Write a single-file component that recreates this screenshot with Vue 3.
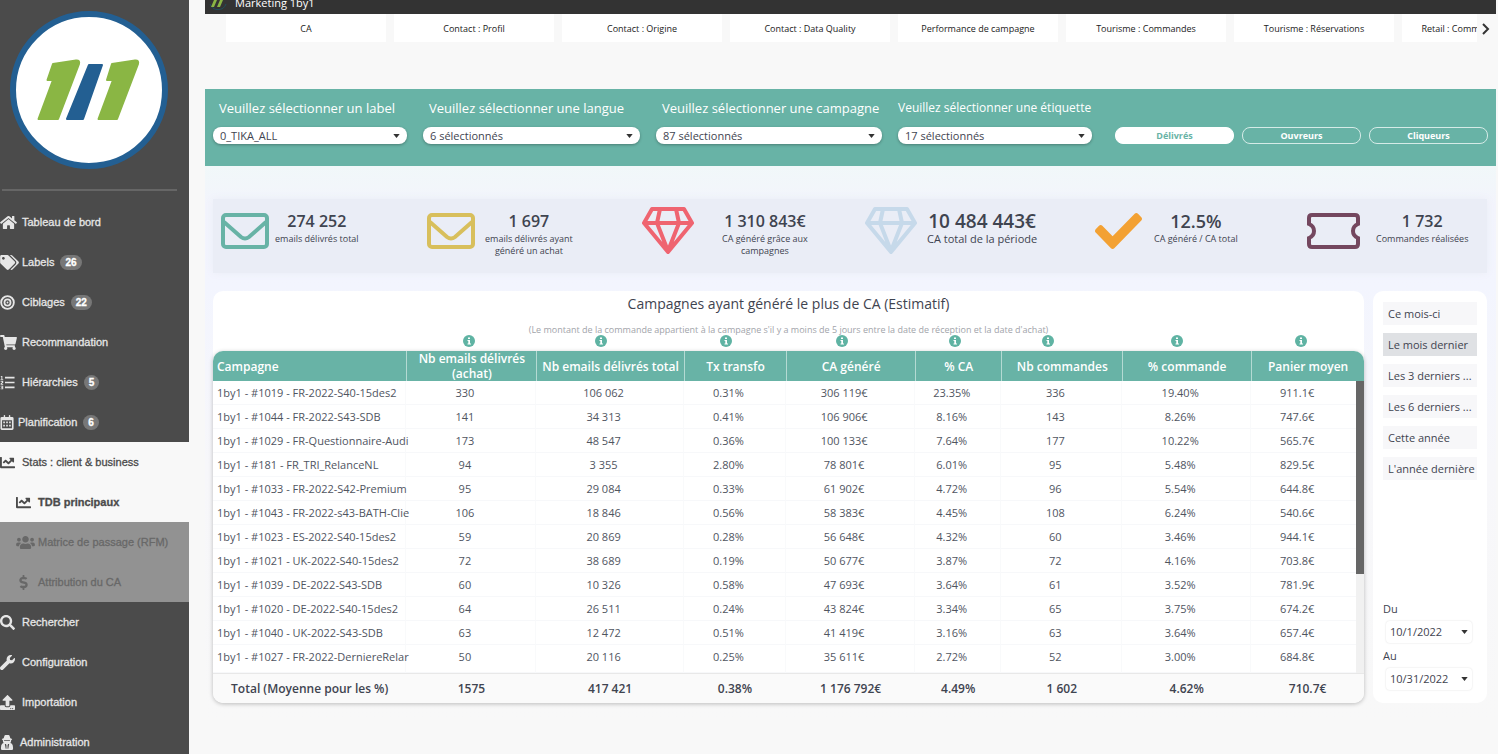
<script setup>
const menuTop = [
  { icon: 'home', label: 'Tableau de bord' },
  { icon: 'tags', label: 'Labels', count: 26 },
  { icon: 'target', label: 'Ciblages', count: 22 },
  { icon: 'cart', label: 'Recommandation' },
  { icon: 'list', label: 'Hiérarchies', count: 5 },
  { icon: 'calendar', label: 'Planification', count: 6 },
  { icon: 'chart', label: 'Stats : client & business', kind: 'open' },
  { icon: 'chart', label: 'TDB principaux', kind: 'current' },
  { icon: 'users', label: 'Matrice de passage (RFM)', kind: 'sub' },
  { icon: 'dollar', label: 'Attribution du CA', kind: 'sub' },
  { icon: 'search', label: 'Rechercher' },
  { icon: 'wrench', label: 'Configuration' },
  { icon: 'upload', label: 'Importation' },
  { icon: 'agent', label: 'Administration' }
]

const icons = {
  home: { box: '0 0 576 512', d: 'M280.37 148.26L96 300.11V464a16 16 0 0 0 16 16l112.06-.29a16 16 0 0 0 15.92-16V368a16 16 0 0 1 16-16h64a16 16 0 0 1 16 16v95.64a16 16 0 0 0 16 16.05L464 480a16 16 0 0 0 16-16V300L295.67 148.26a12.19 12.19 0 0 0-15.3 0zM571.6 251.47L488 182.56V44.05a12 12 0 0 0-12-12h-56a12 12 0 0 0-12 12v72.61L318.47 43a48 48 0 0 0-61 0L4.34 251.47a12 12 0 0 0-1.6 16.9l25.5 31A12 12 0 0 0 45.15 301l235.22-193.74a12.19 12.19 0 0 1 15.3 0L530.9 301a12 12 0 0 0 16.9-1.6l25.5-31a12 12 0 0 0-1.7-16.93z' },
  tags: { box: '0 0 640 512', d: 'M497.941 225.941L286.059 14.059A48 48 0 0 0 252.118 0H48C21.49 0 0 21.49 0 48v204.118a48 48 0 0 0 14.059 33.941l211.882 211.882c18.744 18.745 49.136 18.746 67.882 0l204.118-204.118c18.745-18.745 18.745-49.137 0-67.882zM112 160c-26.51 0-48-21.49-48-48s21.49-48 48-48 48 21.49 48 48-21.49 48-48 48zm513.941 133.823L421.823 497.941c-18.745 18.745-49.137 18.745-67.882 0l-.36-.36L527.64 323.522c16.999-16.999 26.36-39.6 26.36-63.64s-9.362-46.641-26.36-63.64L331.397 0h48.721a48 48 0 0 1 33.941 14.059l211.882 211.882c18.745 18.745 18.745 49.137 0 67.882z' },
  target: { box: '0 0 512 512', d: 'M256 8a248 248 0 1 0 0 496a248 248 0 1 0 0-496zM256 72a184 184 0 1 1 0 368a184 184 0 1 1 0-368zM256 122a134 134 0 1 0 0 268a134 134 0 1 0 0-268zM256 182a74 74 0 1 1 0 148a74 74 0 1 1 0-148zM256 224a32 32 0 1 0 0 64a32 32 0 1 0 0-64z' },
  cart: { box: '0 0 576 512', d: 'M528.12 301.319l47.273-208C578.806 78.301 567.391 64 551.99 64H159.208l-9.166-44.81C147.758 8.021 137.93 0 126.529 0H24C10.745 0 0 10.745 0 24v16c0 13.255 10.745 24 24 24h69.883l70.248 343.435C147.325 417.1 136 435.222 136 456c0 30.928 25.072 56 56 56s56-25.072 56-56c0-15.674-6.447-29.835-16.824-40h209.647C430.447 426.165 424 440.326 424 456c0 30.928 25.072 56 56 56s56-25.072 56-56c0-22.172-12.888-41.332-31.579-50.405l5.517-24.276c3.413-15.018-8.002-29.319-23.403-29.319H218.117l-6.545-32h293.145c11.206 0 20.92-7.754 23.403-18.681z' },
  list: { box: '0 0 512 512', d: 'M170 60h326v56H170zM170 228h326v56H170zM170 396h326v56H170zM30 30h50v110h30v26H20v-26h26V62H24zM20 200h90v66l-54 40h54v28H20v-42l52-42v-20H20zM20 370h90v116H20v-26h58v-20H40v-24h38v-20H20z' },
  calendar: { box: '0 0 448 512', d: 'M48 64h64V16q0-16 16-16h16q16 0 16 16v48h128V16q0-16 16-16h16q16 0 16 16v48h64q48 0 48 48v352q0 48-48 48H48q-48 0-48-48V112q0-48 48-48zM56 176v272q0 8 8 8h320q8 0 8-8V176zM96 224h56v56H96zM196 224h56v56h-56zM296 224h56v56h-56zM96 336h56v56H96zM196 336h56v56h-56zM296 336h56v56h-56z' },
  chart: { box: '0 0 512 512', d: 'M496 384H64V80c0-8.84-7.16-16-16-16H16C7.16 64 0 71.16 0 80v336c0 17.67 14.33 32 32 32h464c8.84 0 16-7.16 16-16v-32c0-8.84-7.16-16-16-16zM464 96H345.94c-21.38 0-32.09 25.85-16.97 40.97l32.4 32.4L288 242.75l-73.37-73.37c-12.5-12.5-32.76-12.5-45.25 0l-68.69 68.69c-6.25 6.25-6.25 16.38 0 22.63l22.62 22.62c6.25 6.25 16.38 6.25 22.63 0L192 237.25l73.37 73.37c12.5 12.5 32.76 12.5 45.25 0l96-96 32.4 32.4c15.12 15.12 40.97 4.41 40.97-16.97V112c.01-8.84-7.15-16-15.99-16z' },
  users: { box: '0 0 640 512', d: 'M96 224c35.3 0 64-28.7 64-64s-28.7-64-64-64-64 28.7-64 64 28.7 64 64 64zm448 0c35.3 0 64-28.7 64-64s-28.7-64-64-64-64 28.7-64 64 28.7 64 64 64zm32 32h-64c-17.6 0-33.5 7.1-45.1 18.6 40.3 22.1 68.9 62 75.1 109.4h66c17.7 0 32-14.3 32-32v-32c0-35.3-28.7-64-64-64zm-256 0c61.9 0 112-50.1 112-112S381.9 32 320 32 208 82.1 208 144s50.1 112 112 112zm76.8 32h-8.3c-20.8 10-43.9 16-68.5 16s-47.6-6-68.5-16h-8.3C179.6 288 128 339.6 128 403.2V432c0 26.5 21.5 48 48 48h288c26.5 0 48-21.5 48-48v-28.8c0-63.6-51.6-115.2-115.2-115.2zm-223.7-13.4C161.5 263.1 145.6 256 128 256H64c-35.3 0-64 28.7-64 64v32c0 17.7 14.3 32 32 32h65.9c6.3-47.4 34.9-87.3 75.2-109.4z' },
  dollar: { box: '-112 0 512 512', d: 'M209.2 233.4l-108-31.6C88.7 198.2 80 186.5 80 173.5c0-16.3 13.2-29.5 29.5-29.5h66.3c12.2 0 24.2 3.7 34.2 10.5 6.1 4.1 14.3 3.1 19.5-2l34.8-34c7.1-6.9 6.1-18.4-1.8-24.5C238 74.8 207.4 64.1 176 64V16c0-8.8-7.2-16-16-16h-32c-8.8 0-16 7.2-16 16v48h-2.5C45.8 64-5.4 118.7.5 183.6c4.2 46.1 39.4 83.6 83.8 96.6l102.5 30c12.5 3.7 21.2 15.3 21.2 28.3 0 16.3-13.2 29.5-29.5 29.5h-66.3C100 368 88 364.3 78 357.5c-6.1-4.1-14.3-3.1-19.5 2l-34.8 34c-7.1 6.9-6.1 18.4 1.8 24.5 24.5 19.2 55.1 29.9 86.5 30v48c0 8.8 7.2 16 16 16h32c8.8 0 16-7.2 16-16v-48.2c46.6-.9 90.3-28.6 105.7-72.7 21.5-61.6-14.6-124.8-72.5-141.7z' },
  search: { box: '0 0 512 512', d: 'M505 442.7L405.3 343c-4.5-4.5-10.6-7-17-7H372c27.6-35.3 44-79.7 44-128C416 93.1 322.9 0 208 0S0 93.1 0 208s93.1 208 208 208c48.3 0 92.7-16.4 128-44v16.3c0 6.4 2.5 12.5 7 17l99.7 99.7c9.4 9.4 24.6 9.4 33.9 0l28.3-28.3c9.4-9.4 9.4-24.6.1-34zM208 336c-70.7 0-128-57.2-128-128 0-70.7 57.2-128 128-128 70.7 0 128 57.2 128 128 0 70.7-57.2 128-128 128z' },
  wrench: { box: '0 0 512 512', d: 'M507.73 109.1c-2.24-9.03-13.54-12.09-20.12-5.51l-74.36 74.36-67.88-11.31-11.31-67.88 74.36-74.36c6.62-6.62 3.43-17.9-5.66-20.16-47.38-11.74-99.55.91-136.58 37.93-39.64 39.64-50.55 97.1-34.05 147.2L18.74 402.76c-24.99 24.99-24.99 65.51 0 90.5 24.99 24.99 65.51 24.99 90.5 0l213.21-213.21c50.12 16.71 107.47 5.68 147.37-34.22 37.07-37.07 49.7-89.32 37.91-136.73z' },
  upload: { box: '0 0 512 512', d: 'M296 384h-80c-13.3 0-24-10.7-24-24V192h-87.7c-17.8 0-26.7-21.5-14.1-34.1L242.3 5.7c7.5-7.5 19.8-7.5 27.3 0l152.2 152.2c12.6 12.6 3.7 34.1-14.1 34.1H320v168c0 13.3-10.7 24-24 24zm216-8v112c0 13.3-10.7 24-24 24H24c-13.3 0-24-10.7-24-24V376c0-13.3 10.7-24 24-24h136v8c0 30.9 25.1 56 56 56h80c30.9 0 56-25.1 56-56v-8h136c13.3 0 24 10.7 24 24zm-124 88c0-11-9-20-20-20s-20 9-20 20 9 20 20 20 20-9 20-20zm64 0c0-11-9-20-20-20s-20 9-20 20 9 20 20 20 20-9 20-20z' },
  agent: { box: '0 0 448 512', d: 'M110 110L140 14Q150 0 170 0H278Q298 0 308 14L338 110Q400 122 400 145Q400 168 366 172V200Q366 240 340 270L380 290Q430 330 430 430V470Q430 512 392 512H56Q18 512 18 470V430Q18 330 68 290L108 270Q82 240 82 200V172Q48 168 48 145Q48 122 110 110zM124 180V206H324V180zM150 310L180 470H206V360L190 310zM298 310L268 470H242V360L258 310z' }
}

const tabs = ['CA', 'Contact : Profil', 'Contact : Origine', 'Contact : Data Quality', 'Performance de campagne', 'Tourisme : Commandes', 'Tourisme : Réservations', 'Retail : Commandes magasin']

const filters = [
  { id: 'label', title: 'Veuillez sélectionner un label', value: '0_TIKA_ALL' },
  { id: 'langue', title: 'Veuillez sélectionner une langue', value: '6 sélectionnés' },
  { id: 'campagne', title: 'Veuillez sélectionner une campagne', value: '87 sélectionnés' },
  { id: 'etiquette', title: 'Veuillez sélectionner une étiquette', value: '17 sélectionnés' }
]
const modes = ['Délivrés', 'Ouvreurs', 'Cliqueurs']

const kpis = [
  { icon: 'mail', tone: 'teal', value: '274 252', lines: ['emails délivrés total'] },
  { icon: 'mail', tone: 'gold', value: '1 697', lines: ['emails délivrés ayant', 'généré un achat'] },
  { icon: 'gem', tone: 'red', value: '1 310 843€', lines: ['CA généré grâce aux', 'campagnes'] },
  { icon: 'gem', tone: 'sky', value: '10 484 443€', lines: ['CA total de la période'] },
  { icon: 'check', tone: 'orange', value: '12.5%', lines: ['CA généré / CA total'] },
  { icon: 'ticket', tone: 'plum', value: '1 732', lines: ['Commandes réalisées'] }
]

const columns = ['Campagne', 'Nb emails délivrés (achat)', 'Nb emails délivrés total', 'Tx transfo', 'CA généré', '% CA', 'Nb commandes', '% commande', 'Panier moyen']
const rows = [
  ['1by1 - #1019 - FR-2022-S40-15des2', '330', '106 062', '0.31%', '306 119€', '23.35%', '336', '19.40%', '911.1€'],
  ['1by1 - #1044 - FR-2022-S43-SDB', '141', '34 313', '0.41%', '106 906€', '8.16%', '143', '8.26%', '747.6€'],
  ['1by1 - #1029 - FR-Questionnaire-Audi', '173', '48 547', '0.36%', '100 133€', '7.64%', '177', '10.22%', '565.7€'],
  ['1by1 - #181 - FR_TRI_RelanceNL', '94', '3 355', '2.80%', '78 801€', '6.01%', '95', '5.48%', '829.5€'],
  ['1by1 - #1033 - FR-2022-S42-Premium', '95', '29 084', '0.33%', '61 902€', '4.72%', '96', '5.54%', '644.8€'],
  ['1by1 - #1043 - FR-2022-s43-BATH-Clie', '106', '18 846', '0.56%', '58 383€', '4.45%', '108', '6.24%', '540.6€'],
  ['1by1 - #1023 - ES-2022-S40-15des2', '59', '20 869', '0.28%', '56 648€', '4.32%', '60', '3.46%', '944.1€'],
  ['1by1 - #1021 - UK-2022-S40-15des2', '72', '38 689', '0.19%', '50 677€', '3.87%', '72', '4.16%', '703.8€'],
  ['1by1 - #1039 - DE-2022-S43-SDB', '60', '10 326', '0.58%', '47 693€', '3.64%', '61', '3.52%', '781.9€'],
  ['1by1 - #1020 - DE-2022-S40-15des2', '64', '26 511', '0.24%', '43 824€', '3.34%', '65', '3.75%', '674.2€'],
  ['1by1 - #1040 - UK-2022-S43-SDB', '63', '12 472', '0.51%', '41 419€', '3.16%', '63', '3.64%', '657.4€'],
  ['1by1 - #1027 - FR-2022-DerniereRelar', '50', '20 116', '0.25%', '35 611€', '2.72%', '52', '3.00%', '684.8€']
]
const totals = ['Total (Moyenne pour les %)', '1575', '417 421', '0.38%', '1 176 792€', '4.49%', '1 602', '4.62%', '710.7€']

const periods = ['Ce mois-ci', 'Le mois dernier', 'Les 3 derniers ...', 'Les 6 derniers ...', 'Cette année', "L'année dernière"]
const dates = [
  { id: 'du', title: 'Du', value: '10/1/2022' },
  { id: 'au', title: 'Au', value: '10/31/2022' }
]
</script>

<template>
  <div class="app">
    <aside class="sidebar">
      <svg class="brand" viewBox="0 0 158 158" role="img" aria-label="1by1">
        <circle cx="79" cy="79" r="76" fill="#fff" stroke="#235f92" stroke-width="6" />
        <g stroke-linejoin="round" stroke-width="2">
          <path d="M43 53L66 49.500Q70 49 69 53L48 108H28.500L43 69H37.500z" fill="#8ab644" stroke="#8ab644" />
          <path d="M79 54H92L73 108H57z" fill="#235f92" stroke="#235f92" />
          <path d="M102 53L125 49.500Q129 49 128 53L107 108H88.500L103 69H97z" fill="#8ab644" stroke="#8ab644" />
        </g>
      </svg>
      <hr class="rule" />
      <nav class="menu">
        <a v-for="m in menuTop" :key="m.label" href="#" class="item" :class="m.kind">
          <svg class="glyph" :class="'g-' + m.icon" :viewBox="icons[m.icon].box" aria-hidden="true"><path :d="icons[m.icon].d" fill="currentColor" fill-rule="evenodd" /></svg>
          <span>{{ m.label }}</span>
          <span v-if="m.count" class="count">{{ m.count }}</span>
        </a>
      </nav>
    </aside>

    <main class="main">
      <header class="topbar">
        <svg class="mini" viewBox="0 0 18 14" aria-hidden="true">
          <path d="M1 4A8.500 8.500 0 0 0 17 4" fill="none" stroke="#1f4f5c" />
          <path d="M5 0H8L5 7H2zM11 0H14L11 7H8z" fill="#8ab644" />
        </svg>
        <span class="title">Marketing 1by1</span>
      </header>
      <div class="tabbar">
        <div class="tabs">
          <button v-for="t in tabs" :key="t" type="button" class="tab">{{ t }}</button>
        </div>
        <button type="button" class="next" aria-label="Onglets suivants">
          <svg viewBox="0 0 10 14" aria-hidden="true"><path d="M2 2L7 7L2 12" fill="none" stroke="#333" stroke-width="2" /></svg>
        </button>
      </div>

      <section class="filters">
        <div v-for="f in filters" :key="f.id" class="filter" :class="f.id">
          <label :for="f.id">{{ f.title }}</label>
          <div class="pick">
            <select :id="f.id"><option>{{ f.value }}</option></select>
            <svg class="caret" viewBox="0 0 8 5" aria-hidden="true"><path d="M0 0H8L4 5z" fill="#333" /></svg>
          </div>
        </div>
        <div class="modes">
          <button v-for="(m, i) in modes" :key="m" type="button" class="mode" :class="{ on: i === 0 }">{{ m }}</button>
        </div>
      </section>

      <div class="board">
        <section class="kpis">
          <div v-for="k in kpis" :key="k.value" class="kpi" :class="k.tone">
            <svg v-if="k.icon === 'mail'" class="k-mail" viewBox="0 0 48 36" aria-hidden="true">
              <rect x="2" y="2" width="44" height="32" rx="3" fill="none" stroke="currentColor" stroke-width="4" />
              <path d="M3 9L20 24Q24 27 28 24L45 9" fill="none" stroke="currentColor" stroke-width="4" />
            </svg>
            <svg v-else-if="k.icon === 'gem'" class="k-gem" viewBox="0 0 52 48" aria-hidden="true">
              <path d="M10 2H42L50 16L26 45L2 16zM2 16H50M18 2L15 16L26 44L37 16L34 2" fill="none" stroke="currentColor" stroke-width="4" stroke-linejoin="round" />
            </svg>
            <svg v-else-if="k.icon === 'check'" class="k-check" viewBox="0 65 512 382" preserveAspectRatio="none" aria-hidden="true">
              <path d="M173.898 439.404l-166.4-166.4c-9.997-9.997-9.997-26.206 0-36.204l36.203-36.204c9.997-9.998 26.207-9.998 36.204 0L192 312.69 432.095 72.596c9.997-9.997 26.207-9.997 36.204 0l36.203 36.204c9.997 9.997 9.997 26.206 0 36.204l-294.4 294.401c-9.998 9.997-26.207 9.997-36.204-.001z" fill="currentColor" />
            </svg>
            <svg v-else class="k-ticket" viewBox="0 0 53 36" aria-hidden="true">
              <path d="M5 2H48Q51 2 51 5V11Q46 13 46 18Q46 23 51 25V31Q51 34 48 34H5Q2 34 2 31V25Q7 23 7 18Q7 13 2 11V5Q2 2 5 2z" fill="none" stroke="currentColor" stroke-width="4" />
            </svg>
            <div class="k-text">
              <strong>{{ k.value }}</strong>
              <span v-for="l in k.lines" :key="l">{{ l }}</span>
            </div>
          </div>
        </section>

        <div class="lower">
          <section class="report">
            <h2>Campagnes ayant généré le plus de CA (Estimatif)</h2>
            <p>(Le montant de la commande appartient à la campagne s'il y a moins de 5 jours entre la date de réception et la date d'achat)</p>
            <div class="hints">
              <svg v-for="n in 8" :key="n" class="hint" viewBox="0 0 12 12" aria-hidden="true">
                <circle cx="6" cy="6" r="6" fill="#5fb3a3" />
                <path d="M5 2.500H7V4H5zM4.500 5H7V8.500H8V9.500H4.500V8.500H5.300V6H4.500z" fill="#fff" />
              </svg>
            </div>
            <div class="grid">
              <table>
                <colgroup><col v-for="c in columns.length" :key="c" :class="'c' + c" /></colgroup>
                <thead><tr><th v-for="c in columns" :key="c" scope="col">{{ c }}</th></tr></thead>
                <tbody>
                  <tr v-for="r in rows" :key="r[0]"><td v-for="(v, i) in r" :key="i">{{ v }}</td></tr>
                </tbody>
                <tfoot><tr><td v-for="v in totals" :key="v">{{ v }}</td></tr></tfoot>
              </table>
              <div class="track"><div class="thumb"></div></div>
            </div>
          </section>

          <section class="period">
            <button v-for="(p, i) in periods" :key="p" type="button" class="range" :class="{ on: i === 1 }">{{ p }}</button>
            <div class="dates">
              <div v-for="d in dates" :key="d.id" class="date">
                <label :for="d.id">{{ d.title }}</label>
                <div class="pick">
                  <select :id="d.id"><option>{{ d.value }}</option></select>
                  <svg class="caret" viewBox="0 0 8 5" aria-hidden="true"><path d="M0 0H8L4 5z" fill="#333" /></svg>
                </div>
              </div>
            </div>
          </section>
        </div>
      </div>
    </main>
  </div>
</template>

<style>
body {
  background: #f8f8f8;
}
</style>

<style scoped>
* {
  box-sizing: border-box;
}
.app {
  display: flex;
  height: 100vh;
  overflow: hidden;
  font-family: "Open Sans", "Noto Sans", sans-serif;
  color: #3f4450;
}
button,
select {
  font-family: inherit;
  border: 0;
  margin: 0;
}
.sidebar {
  flex: none;
  width: 189px;
  background: #4b4b4b;
  font-family: "Liberation Sans", Arial, sans-serif;
}
.brand {
  display: block;
  width: 158px;
  height: 158px;
  margin: 11px 0 0 10px;
}
.rule {
  border: 0;
  height: 2px;
  background: #666;
  margin: 20px 12px 0 2px;
}
.menu {
  padding-top: 11px;
}
.item {
  display: flex;
  align-items: center;
  height: 40px;
  color: #e6e6e6;
  font-size: 11px;
  line-height: 16px;
  text-decoration: none;
  white-space: nowrap;
  -webkit-text-stroke: 0.3px currentColor;
}
.glyph {
  width: 15px;
  height: 15px;
  margin-right: 7px;
  flex: none;
}
.g-home,
.g-cart {
  width: 17px;
  margin-right: 5px;
}
.g-tags,
.g-users {
  width: 19px;
  margin-right: 3px;
}
.g-calendar,
.g-agent {
  width: 14px;
  margin-right: 4px;
}
.g-agent {
  margin-right: 6px;
}
.count {
  margin-left: 6px;
  padding: 0 5px;
  height: 15px;
  line-height: 15px;
  border-radius: 8px;
  background: #777;
  color: #fff;
  font-size: 10px;
  font-weight: bold;
}
.open,
.current {
  background: #f8f8f8;
  color: #4b4b4b;
}
.current {
  padding-left: 16px;
  font-weight: bold;
}
.sub {
  padding-left: 16px;
  background: #929292;
  color: #686868;
}
.main {
  flex: 1;
  min-width: 0;
  padding: 0 2px 0 16px;
  background: #f8f8f8;
}
.topbar {
  display: flex;
  height: 14px;
  background: #333;
  overflow: hidden;
}
.mini {
  width: 18px;
  height: 14px;
  margin-left: 4px;
}
.title {
  margin: -6px 0 0 8px;
  color: #fff;
  font-size: 11px;
  line-height: 17px;
}
.tabbar {
  display: flex;
  height: 28px;
  padding-left: 21px;
}
.tabs {
  flex: 1;
  min-width: 0;
  display: flex;
  gap: 8px;
  overflow: hidden;
}
.tab {
  flex: none;
  width: 160px;
  background: #fff;
  color: #222;
  font-size: 9px;
  font-weight: 500;
  padding: 0;
}
.next {
  width: 19px;
  background: none;
  padding: 2px 0 0 4px;
}
.next svg {
  display: block;
  width: 10px;
  height: 14px;
}
.filters {
  display: grid;
  grid-template-columns: minmax(0, 194fr) minmax(0, 217fr) minmax(0, 226fr) minmax(0, 194fr) minmax(0, 380fr);
  gap: 16px;
  margin-top: 47px;
  padding: 10px 8px 0;
  height: 77px;
  background: #68b3a6;
}
.filter label {
  display: block;
  padding-left: 6px;
  height: 28px;
  line-height: 18px;
  font-size: 13px;
  color: #fff;
  white-space: nowrap;
}
.filter.etiquette label {
  padding-left: 0;
  font-size: 12px;
}
.pick {
  position: relative;
}
.pick select {
  display: block;
  width: 100%;
  height: 17px;
  padding: 0 20px 0 7px;
  border-radius: 8px;
  background: #fff;
  color: #3f4450;
  font-size: 11px;
  line-height: 16px;
  appearance: none;
  box-shadow: 0 1px 3px rgba(0, 0, 0, 0.3);
}
.caret {
  position: absolute;
  right: 7px;
  top: 7px;
  width: 7px;
  height: 4px;
}
.modes {
  display: flex;
  gap: 8px;
  padding: 28px 0 0 7px;
}
.mode {
  flex: 1;
  height: 17px;
  border: 1px solid #d5ebe7;
  border-radius: 8px;
  background: transparent;
  color: #fff;
  font-size: 9px;
  line-height: 13px;
  font-weight: 700;
  padding: 0;
}
.mode.on {
  background: #fff;
  border-color: #fff;
  color: #68b3a6;
}
.board {
  padding: 33px 9px 20px 8px;
  background: linear-gradient(#f1f8f9 0, #f3f4fc 40px, #f3f5fe 120px, #f7f7fa 300px, #f8f8f8 100%);
}
.kpis {
  display: grid;
  grid-template-columns: 206fr 215fr 223fr 230fr 212fr 180fr;
  height: 74px;
  padding-left: 8px;
  background: #eaedf6;
  box-shadow: 0 0 8px #eaedf6;
}
.kpi {
  display: flex;
  gap: 12px;
}
.kpi svg {
  flex: none;
}
.teal { color: #68b3a6; gap: 6px; }
.gold { color: #d8bf5c; gap: 10px; }
.red { color: #ef6470; gap: 28px; }
.sky { color: #c6d9ea; gap: 10px; }
.orange { color: #f3a133; }
.plum { color: #74475f; gap: 16px; }
.k-mail { width: 48px; height: 36px; margin-top: 14px; }
.k-gem { width: 52px; height: 48px; margin-top: 8px; }
.k-check { width: 47px; height: 36px; margin-top: 14px; }
.k-ticket { width: 53px; height: 36px; margin-top: 14px; }
.k-text {
  display: flex;
  flex-direction: column;
  align-items: center;
  padding-top: 10px;
  color: #3f4450;
  font-size: 9px;
  line-height: 12px;
  white-space: nowrap;
}
.k-text strong {
  font-size: 16px;
  line-height: 24px;
  font-weight: 600;
}
.sky .k-text {
  font-size: 11px;
}
.sky strong {
  font-size: 19px;
}
.orange strong {
  font-size: 18px;
}
.lower {
  display: flex;
  gap: 9px;
  margin-top: 18px;
}
.report {
  flex: 1;
  min-width: 0;
  background: #fff;
  border-radius: 10px;
}
.report h2 {
  margin: 0;
  padding-top: 3px;
  text-align: center;
  font-size: 14px;
  line-height: 20px;
  font-weight: 400;
}
.report p {
  margin: 9px 0 0;
  text-align: center;
  font-size: 9px;
  line-height: 14px;
  color: #a2a4aa;
}
.hints {
  display: grid;
  grid-template-columns: 130fr 134fr 116fr 116fr 110fr 76fr 182fr 66fr;
  justify-items: center;
  height: 14px;
  padding: 0 30px 0 191px;
}
.hint {
  width: 12px;
  height: 12px;
  margin-top: -2px;
}
.grid {
  position: relative;
  border-radius: 10px;
  overflow: hidden;
  box-shadow: 0 1px 4px rgba(0, 0, 0, 0.25);
}
table {
  width: 100%;
  table-layout: fixed;
  border-collapse: separate;
  border-spacing: 0;
}
.c1 { width: 16.8%; }
.c2 { width: 11.3%; }
.c3 { width: 12.8%; }
.c4 { width: 8.9%; }
.c5 { width: 11.2%; }
.c6 { width: 7.5%; }
.c7 { width: 10.5%; }
.c8 { width: 11.2%; }
.c9 { width: 9.8%; }
th {
  height: 30px;
  padding: 0;
  background: #68b3a6;
  color: #fff;
  font-size: 12px;
  line-height: 15px;
  font-weight: 600;
  border-left: 1px solid #b4dad3;
}
th:first-child {
  text-align: left;
  padding-left: 4px;
  border-left: 0;
}
tbody td {
  height: 24px;
  padding: 0 12px 0 0;
  text-align: center;
  font-size: 11px;
  line-height: 16px;
  color: #50555f;
  white-space: nowrap;
  border-bottom: 1px solid #f7f8fa;
  border-right: 1px solid #f9fafb;
}
tbody td:first-child {
  text-align: left;
  padding: 0 0 0 4px;
}
tbody td:last-child {
  padding-right: 20px;
}
tbody tr:last-child td {
  height: 28px;
  padding-bottom: 3px;
}
tfoot td {
  height: 30px;
  padding: 0;
  text-align: center;
  font-size: 12px;
  line-height: 16px;
  font-weight: 600;
  background: #fafafa;
  border-top: 1px solid #e8e8e8;
}
.track {
  position: absolute;
  right: 0;
  top: 30px;
  bottom: 30px;
  width: 8px;
  background: #f1f1f1;
}
.thumb {
  height: 66%;
  background: #666;
}
.period {
  flex: none;
  width: 114px;
  padding: 11px 10px 10px;
  display: flex;
  flex-direction: column;
  gap: 8px;
  background: #fff;
  border-radius: 10px;
}
.range {
  height: 23px;
  padding: 0 0 1px 5px;
  text-align: left;
  background: #f7f7f9;
  color: #3f4450;
  font-size: 11px;
  white-space: nowrap;
}
.range.on {
  background: #dfe1e4;
}
.dates {
  margin-top: auto;
}
.date label {
  display: block;
  height: 22px;
  font-size: 11px;
  line-height: 20px;
}
.date .pick {
  margin: 0 5px 3px 3px;
}
.date select {
  height: 22px;
  padding: 0 20px 0 4px;
  border-radius: 4px;
  box-shadow: 0 0 2px #ddd;
}
.date .caret {
  top: 9px;
  right: 4px;
}
</style>
